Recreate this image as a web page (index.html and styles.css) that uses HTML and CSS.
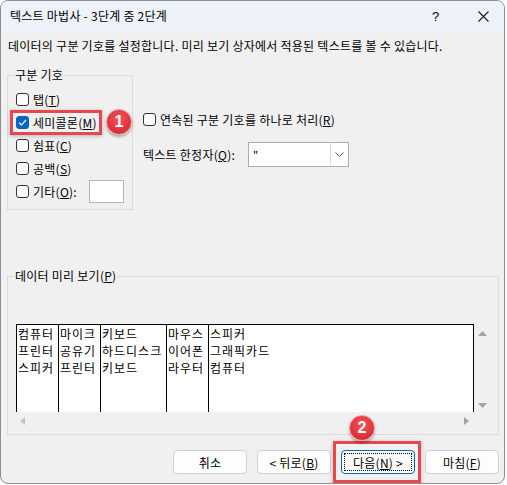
FILE: index.html
```html
<!DOCTYPE html>
<html>
<head>
  <meta charset="UTF-8">
  <title>텍스트 마법사</title>
  <link rel="stylesheet" href="styles.css">
</head>
<body>
  <div class="window">
    <div class="titlebar">
      <span class="title">텍스트 마법사 - 3단계 중 2단계</span>
      <span class="help">?</span>
      <span class="close">
        <svg width="11" height="11" viewBox="0 0 11 11"><path d="M0.5 0.5 L10.5 10.5 M10.5 0.5 L0.5 10.5" stroke="#1a1a1a" stroke-width="1.1" fill="none"/></svg>
      </span>
    </div>

    <div class="content">
      <p class="intro">데이터의 구분 기호를 설정합니다. 미리 보기 상자에서 적용된 텍스트를 볼 수 있습니다.</p>

      <div class="options">
        <fieldset class="delims">
          <legend>구분 기호</legend>
          <label class="check"><span class="box"></span>탭(<u>T</u>)</label>
          <label class="check"><span class="box checked"><svg width="9" height="7" viewBox="0 0 9 7"><path d="M1 3.6 L3.4 6 L8 1" stroke="#fff" stroke-width="1.2" fill="none"/></svg></span>세미콜론(<u>M</u>)</label>
          <label class="check"><span class="box"></span>쉼표(<u>C</u>)</label>
          <label class="check"><span class="box"></span>공백(<u>S</u>)</label>
          <label class="check"><span class="box"></span>기타(<u>O</u>):<span class="otherbox"></span></label>
        </fieldset>

        <div class="side">
          <label class="check"><span class="box"></span>연속된 구분 기호를 하나로 처리(<u>R</u>)</label>
          <div class="qualifier">
            <span class="qlabel">텍스트 한정자(<u>Q</u>):</span>
            <div class="combo">
              <span class="val">"</span>
              <span class="drop"><svg width="9" height="5" viewBox="0 0 9 5"><path d="M0.5 0.5 L4.5 4.5 L8.5 0.5" stroke="#606060" stroke-width="1" fill="none"/></svg></span>
            </div>
          </div>
        </div>
      </div>

      <fieldset class="preview">
        <legend>데이터 미리 보기(<u>P</u>)</legend>
        <div class="pgrid">
          <div class="table">
            <div class="col c1">컴퓨터<br>프린터<br>스피커</div>
            <div class="col c2">마이크<br>공유기<br>프린터</div>
            <div class="col c3">키보드<br>하드디스크<br>키보드</div>
            <div class="col c4">마우스<br>이어폰<br>라우터</div>
            <div class="col c5">스피커<br>그래픽카드<br>컴퓨터</div>
          </div>
          <div class="vscroll">
            <svg width="9" height="5" viewBox="0 0 9 5"><path d="M4.5 0 L9 5 L0 5 Z" fill="#a3a3a3"/></svg>
            <svg width="9" height="5" viewBox="0 0 9 5"><path d="M0 0 L9 0 L4.5 5 Z" fill="#a3a3a3"/></svg>
          </div>
          <div class="hscroll">
            <svg width="5" height="8" viewBox="0 0 5 8"><path d="M5 0 L5 8 L0 4 Z" fill="#c4c4c4"/></svg>
            <svg width="5" height="8" viewBox="0 0 5 8"><path d="M0 0 L5 4 L0 8 Z" fill="#a3a3a3"/></svg>
          </div>
        </div>
      </fieldset>

      <div class="buttons">
        <button class="btn">취소</button>
        <button class="btn">&lt; 뒤로(<u>B</u>)</button>
        <button class="btn primary">다음(<u>N</u>) &gt;</button>
        <button class="btn">마침(<u>F</u>)</button>
      </div>
    </div>

    <div class="highlight hl-semi"></div>
    <div class="badge badge-1">1</div>
    <div class="highlight hl-next"></div>
    <div class="badge badge-2">2</div>
  </div>
</body>
</html>
```

FILE: styles.css
```css
body {
  margin: 0;
  background: #ffffff;
  font-family: "Noto Sans CJK KR", "Noto Sans", sans-serif;
  font-size: 12px;
  letter-spacing: 0.25px;
  color: #000;
}

.window {
  position: relative;
  box-sizing: border-box;
  width: 505px;
  height: 484px;
  border: 1px solid #8e8e8e;
  border-radius: 8px;
  background: #f0f0f0;
  overflow: hidden;
}

.titlebar {
  display: flex;
  align-items: center;
  height: 30px;
  padding-left: 9px;
  background: #eef2fa;
}

.title {
  flex: 1;
  line-height: 16px;
}

.help {
  font-family: "Liberation Sans", sans-serif;
  font-size: 13px;
  width: 12px;
}

.close {
  display: flex;
  margin: 0 15px 0 34px;
}

.content {
  padding: 0 5px 0 6px;
}

.intro {
  margin: 7px 0 0 1px;
  line-height: 16px;
}

u {
  text-decoration-thickness: 1px;
  text-underline-offset: 1px;
}

/* 구분 기호 */
.options {
  display: flex;
  gap: 10px;
  margin-top: 13px;
}

fieldset {
  box-sizing: border-box;
  margin: 0;
  border: 1px solid #dcdcdc;
}

legend {
  padding: 0 1px;
  margin-left: -2px;
  line-height: 16px;
}

.delims {
  width: 126px;
  height: 143px;
  padding: 5px 8px 0 8px;
}

.check {
  display: flex;
  align-items: center;
  height: 23px;
  line-height: 16px;
}

.box {
  box-sizing: border-box;
  display: flex;
  align-items: center;
  justify-content: center;
  width: 13px;
  height: 13px;
  margin-right: 4px;
  border: 1px solid #333;
  border-radius: 3px;
  background: #fff;
}

.box.checked {
  border-color: #0067c0;
  background: #0067c0;
}

.otherbox {
  width: 35px;
  height: 23px;
  margin-left: auto;
  box-sizing: border-box;
  border: 1px solid #b4b4b4;
  background: #fff;
}

.side {
  padding-top: 41px;
}

.qualifier {
  display: flex;
  align-items: center;
  margin-top: 11px;
}

.qlabel {
  width: 105px;
}

.combo {
  box-sizing: border-box;
  display: flex;
  width: 101px;
  height: 25px;
  border: 1px solid #adadad;
  background: #fff;
}

.combo .val {
  flex: 1;
  padding: 3px 0 0 4px;
  font-size: 11px;
}

.combo .drop {
  display: flex;
  align-items: center;
  justify-content: center;
  width: 17px;
  border-left: 1px solid #dadada;
}

/* 데이터 미리 보기 */
.preview {
  width: 492px;
  height: 167px;
  margin-top: 58px;
  padding: 40px 0 0 8px;
}

.pgrid {
  display: grid;
  grid-template-columns: 458px 17px;
  grid-template-rows: 88px 18px;
}

.table {
  display: flex;
  box-sizing: border-box;
  border-top: 1px solid #000;
  background: #fff;
  font-size: 12px;
  letter-spacing: 1px;
  line-height: 17px;
}

.col {
  box-sizing: border-box;
  border-left: 1px solid #000;
  padding-left: 1px;
  white-space: nowrap;
  overflow: hidden;
}

.c1, .c2, .c4 { width: 42px; }
.c3 { width: 66px; }
.c5 { width: 266px; border-right: 1px solid #000; }

.vscroll {
  display: flex;
  flex-direction: column;
  justify-content: space-between;
  align-items: center;
  padding: 7px 0 4px 0;
}

.hscroll {
  display: flex;
  justify-content: space-between;
  align-items: center;
  padding: 0 5px 0 4px;
}

/* 버튼 */
.buttons {
  display: flex;
  justify-content: flex-end;
  gap: 10px;
  margin-top: 15px;
}

.btn {
  box-sizing: border-box;
  width: 74px;
  height: 24px;
  padding: 0;
  font-family: inherit;
  font-size: 12px;
  letter-spacing: 0.25px;
  color: #000;
  background: #fdfdfd;
  border: 1px solid #d0d0d0;
  border-radius: 4px;
}

.btn.primary {
  border: 1px solid #0067c0;
  outline: 1px dotted #000;
  outline-offset: -4px;
}

/* 강조 표시 */
.highlight {
  position: absolute;
  box-sizing: border-box;
  border: 3px solid #e8474d;
  box-shadow: 0 1px 4px rgba(0,0,0,0.25);
}

.hl-semi { left: 9px; top: 109px; width: 92px; height: 25px; }
.hl-next { left: 332px; top: 440px; width: 88px; height: 42px; }

.badge {
  position: absolute;
  box-sizing: border-box;
  display: flex;
  align-items: center;
  justify-content: center;
  width: 26px;
  height: 26px;
  border-radius: 50%;
  border: 1px solid #f59a9d;
  background: radial-gradient(circle at 50% 35%, #f2545a 0%, #dc2f36 70%, #c82229 100%);
  box-shadow: 0 2px 3px rgba(0,0,0,0.3);
  color: #fff;
  font-family: "Liberation Sans", sans-serif;
  font-weight: bold;
  font-size: 16px;
  letter-spacing: 0;
}

.badge-1 { left: 105px; top: 108px; }
.badge-2 { left: 348px; top: 414px; }
```
